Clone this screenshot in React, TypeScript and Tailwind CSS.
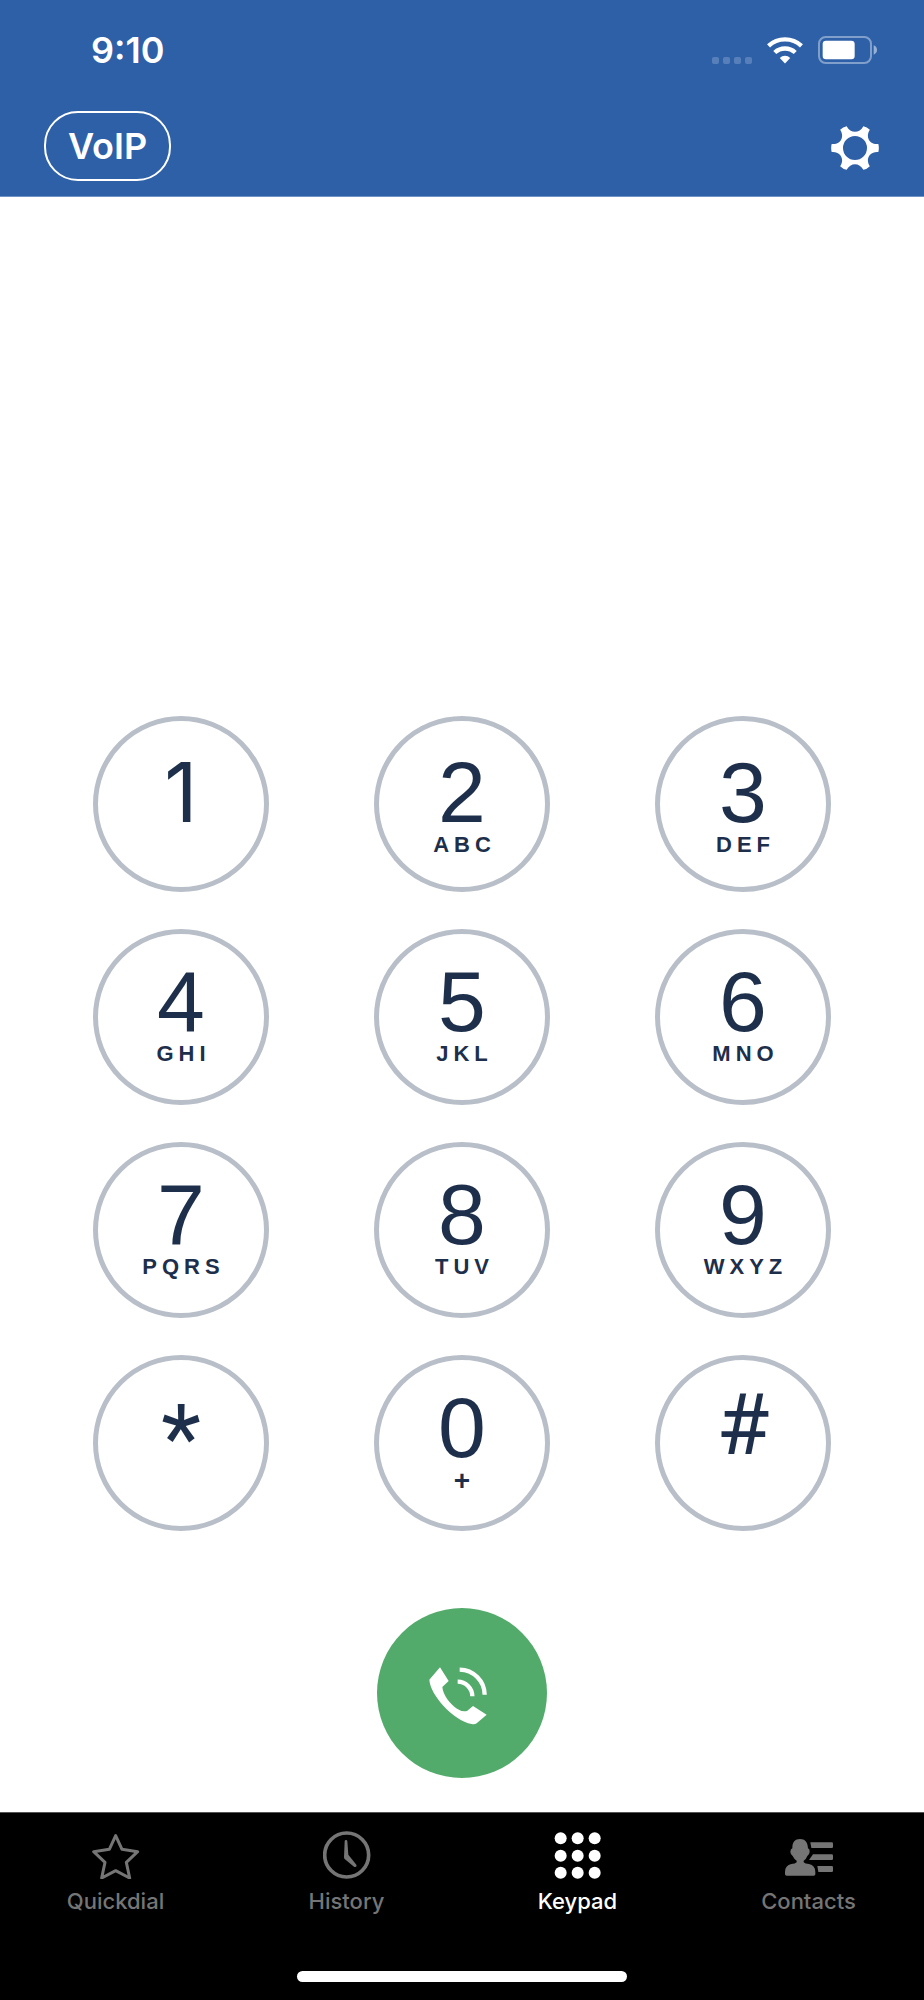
import React, { useState } from "react";
import clsx from "clsx";

type Key = { digit: string; letters?: string };

const KEY_ROWS: Key[][] = [
    [{ digit: "1" }, { digit: "2", letters: "ABC" }, { digit: "3", letters: "DEF" }],
    [{ digit: "4", letters: "GHI" }, { digit: "5", letters: "JKL" }, { digit: "6", letters: "MNO" }],
    [{ digit: "7", letters: "PQRS" }, { digit: "8", letters: "TUV" }, { digit: "9", letters: "WXYZ" }],
    [{ digit: "*" }, { digit: "0", letters: "+" }, { digit: "#" }],
];

const GLYPH_STYLES: Record<string, string> = {
    "1": "font-[Inter,sans-serif] text-[82px] leading-[82px]",
    "*": "font-[Roboto,sans-serif] text-[92px] leading-[104px]",
    "#": "font-[Roboto,sans-serif] text-[86px] leading-[76px]",
};

function WifiIcon() {
    return (
        <svg viewBox="0 0 108 80" className="h-[27px] w-9" fill="none" stroke="currentColor" strokeWidth="13">
            <path d="M4.6 26a72.5 72.5 0 0 1 98.8 0" />
            <path d="M23.3 46.1a45 45 0 0 1 61.4 0" />
            <path d="M38.3 62.2a23 23 0 0 1 31.4 0L54 79z" fill="currentColor" stroke="none" />
        </svg>
    );
}

function BatteryIcon() {
    return (
        <svg viewBox="0 0 177 84" className="h-7 w-[59px]" fill="currentColor">
            <rect x="3" y="3" width="156" height="78" rx="20" fill="none" stroke="currentColor" strokeWidth="6" opacity="0.4" />
            <rect x="14" y="14" width="96" height="56" rx="10" />
            <path d="M167 28q10 4 10 14t-10 14z" opacity="0.5" />
        </svg>
    );
}

function GearIcon() {
    return (
        <svg viewBox="-72 -72 144 144" className="size-12" fill="currentColor" fillRule="evenodd">
            <path d="M70-12Q73 0 70 12C44 9 30 33.5 44.5 54.5Q36 63 25 65.5C14 43-14 43-25 65.5Q-36 63-44.5 54.5C-30 33.5-44 9-70 12Q-73 0-70-12C-44-9-30-33.5-44.5-54.5Q-36-63-25-65.5C-14-43 14-43 25-65.5Q36-63 44.5-54.5C30-33.5 44-9 70-12ZM36 0A36 36 0 1 0-36 0A36 36 0 1 0 36 0Z" />
        </svg>
    );
}

function CallIcon() {
    return (
        <svg viewBox="0 0 174 174" className="size-[58px]" fill="currentColor">
            <path d="M33 1L59 42L40 60C42 84 62 110 84 125Q101 136 114 132L132 117L173 143L143 169Q137 173 128 171C72 160 4 84 1 38Z" />
            <g fill="none" stroke="currentColor" strokeWidth="13">
                <path d="M92 8A76 76 0 0 1 167 83" />
                <path d="M86 44A44 44 0 0 1 130 88" />
            </g>
        </svg>
    );
}

function StarIcon() {
    return (
        <svg viewBox="0 0 144 144" className="size-12" fill="none" stroke="currentColor" strokeWidth="9" strokeLinejoin="round">
            <path d="M71 14L90 55L137 62L103 94L113 141L71 119L29 141L39 94L5 62L52 55Z" />
        </svg>
    );
}

function ClockIcon() {
    return (
        <svg viewBox="0 0 144 144" className="size-12" fill="currentColor">
            <circle cx="71" cy="72" r="66" fill="none" stroke="currentColor" strokeWidth="11" />
            <path d="M65 31Q65 27 69 27T73 31L76 71L100 101Q102 105 99 107T93 107L65 84Q63 82 63 79Z" />
        </svg>
    );
}

function KeypadIcon() {
    return (
        <svg viewBox="0 0 144 144" className="size-12" fill="currentColor">
            {[22, 74, 125].map((cy) =>
                [20, 71, 122].map((cx) => <circle key={`${cx}-${cy}`} cx={cx} cy={cy} r="18" />)
            )}
        </svg>
    );
}

function ContactsIcon() {
    return (
        <svg viewBox="0 0 144 144" className="size-12" fill="currentColor">
            <path d="M45 24C60 24 68 32 69 52Q75 54 74 63Q73 71 67 75Q64 84 56 89V94Q60 99 72 99Q91 103 91 123V130Q91 134 86 134H5Q0 134 0 129V123Q0 103 19 99Q31 99 35 94V89Q27 84 23 75Q17 71 16 63Q16 54 22 52C22 32 30 24 45 24Z" />
            <path d="M76 34H140Q144 34 144 38V48Q144 51 140 51H79Z" />
            <path d="M84 70H140Q144 70 144 74V84Q144 87 140 87H72Z" />
            <path d="M97 105H140Q144 105 144 109V120Q144 123 140 123H100Z" />
        </svg>
    );
}

const TABS = [
    { label: "Quickdial", icon: <StarIcon /> },
    { label: "History", icon: <ClockIcon /> },
    { label: "Keypad", icon: <KeypadIcon /> },
    { label: "Contacts", icon: <ContactsIcon /> },
];

function StatusBar() {
    return (
        <div className="flex h-10 items-center justify-between pl-[91px] pr-[47px]">
            <span className="text-4xl font-semibold leading-10">9:10</span>
            <div className="flex items-end gap-[15px]">
                <div className="flex gap-1">
                    {[0, 1, 2, 3].map((i) => (
                        <span key={i} className="size-[7px] rounded-xs bg-white/20" />
                    ))}
                </div>
                <WifiIcon />
                <BatteryIcon />
            </div>
        </div>
    );
}

function KeyButton({ digit, letters, low }: Key & { low: boolean }) {
    return (
        <button
            type="button"
            className={clsx(
                "flex size-44 flex-col items-center rounded-full border-5 border-[#b9bfc9] font-['Liberation_Sans',Arial,sans-serif] text-[#1d2f4b]",
                low ? "pt-[31px]" : "pt-[27px]"
            )}
        >
            <span className={GLYPH_STYLES[digit] ?? "text-[86px] leading-20"}>{digit}</span>
            {letters && (
                <span
                    className={clsx(
                        "font-bold",
                        letters === "+" ? "text-[28px] leading-7" : "pl-[5px] text-[22px] leading-[26px] tracking-[5px]"
                    )}
                >
                    {letters}
                </span>
            )}
        </button>
    );
}

export default function App() {
    const [activeTab, setActiveTab] = useState("Keypad");

    return (
        <div className="flex min-h-screen flex-col bg-white font-[Inter,sans-serif]">
            <header className="flex flex-col gap-[41px] border-b border-[#6f93c5] bg-[#2e60a8] pb-[15px] pt-[30px] text-white">
                <StatusBar />
                <div className="flex items-center justify-between pl-11 pr-[45px]">
                    <button type="button" className="h-[70px] w-[127px] rounded-[34px] border-2 border-white text-4xl font-semibold">
                        VoIP
                    </button>
                    <button type="button" aria-label="Settings" className="pt-[3px]">
                        <GearIcon />
                    </button>
                </div>
            </header>

            <main className="flex flex-1 flex-col items-center justify-end pb-[34px]">
                <div className="flex flex-col gap-[37px]">
                    {KEY_ROWS.map((row, i) => (
                        <div key={i} className="flex gap-[105px]">
                            {row.map((key) => (
                                <KeyButton key={key.digit} {...key} low={i === 0} />
                            ))}
                        </div>
                    ))}
                </div>
                <button
                    type="button"
                    aria-label="Call"
                    className="mt-[77px] flex size-[170px] items-center justify-center rounded-full bg-[#53ab6b] pr-2 pt-[6px] text-white"
                >
                    <CallIcon />
                </button>
            </main>

            <nav className="border-t border-[#555555] bg-black pb-[18px] pt-[18px]">
                <div className="grid grid-cols-4">
                    {TABS.map(({ label, icon }) => (
                        <button
                            key={label}
                            type="button"
                            onClick={() => setActiveTab(label)}
                            className={clsx(
                                "flex flex-col items-center gap-2",
                                label === activeTab ? "text-white" : "text-[#757575]"
                            )}
                        >
                            {icon}
                            <span className="text-[22px] font-medium leading-7">{label}</span>
                        </button>
                    ))}
                </div>
                <div className="mx-auto mt-14 h-[11px] w-[330px] rounded-full bg-white" />
            </nav>
        </div>
    );
}
